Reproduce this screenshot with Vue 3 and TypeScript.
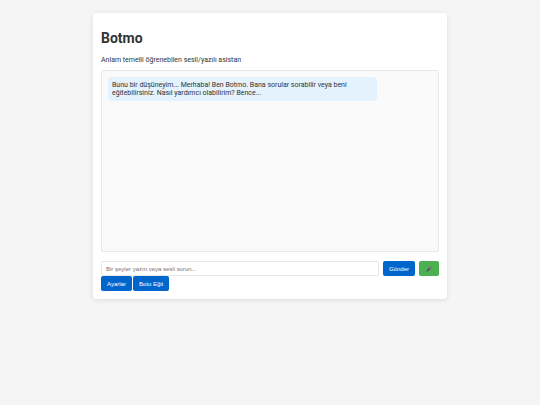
<script setup lang="ts">
import { ref } from 'vue'

interface Message {
  id: number
  text: string
}

const messages = ref<Message[]>([
  {
    id: 1,
    text: 'Bunu bir düşüneyim... Merhaba! Ben Botmo. Bana sorular sorabilir veya beni eğitebilirsiniz. Nasıl yardımcı olabilirim? Bence...',
  },
])
const draft = ref('')
</script>

<template>
  <main class="card">
    <h1 class="title">Botmo</h1>
    <p class="subtitle">Anlam temelli öğrenebilen sesli/yazılı asistan</p>
    <section class="chat" aria-label="Sohbet">
      <div v-for="message in messages" :key="message.id" class="message">{{ message.text }}</div>
    </section>
    <form class="composer" @submit.prevent>
      <input
        v-model="draft"
        class="field"
        type="text"
        aria-label="Mesaj"
        placeholder="Bir şeyler yazın veya sesli sorun..."
      />
      <button class="btn" type="submit">Gönder</button>
      <button class="btn mic" type="button" aria-label="Sesli sor">
        <svg class="icon" viewBox="0 0 16 16" aria-hidden="true">
          <path d="M2.6 15 L1 13.4 L7 5.6 L10.6 9 Z" fill="#4b5357" />
          <circle cx="11.2" cy="4.8" r="4.2" fill="#7b8589" />
          <path d="M9 2.4 L13.6 7 M11.4 1.2 L14.8 4.6" stroke="#596064" stroke-width="0.8" />
          <path d="M7 5 L11 9" stroke="#30383b" stroke-width="1.8" />
        </svg>
      </button>
    </form>
    <div class="actions">
      <button class="btn" type="button">Ayarlar</button>
      <button class="btn" type="button">Botu Eğit</button>
    </div>
  </main>
</template>

<style>
body {
  margin: 0;
  background: #f5f5f5;
}
</style>

<style scoped>
.card {
  box-sizing: border-box;
  max-width: 354px;
  margin: 13px auto;
  padding: 17px 8px 8px;
  background: #fff;
  border-radius: 3px;
  box-shadow: 0 1px 5px rgba(0, 0, 0, 0.1);
  color: #333;
  font-family: Roboto, sans-serif;
  font-size: 7px;
  line-height: 8px;
}

.title {
  margin: 0 0 10px;
  font-size: 14px;
  line-height: 16px;
  font-weight: 700;
}

.subtitle {
  margin: 0 0 6px;
}

.chat {
  box-sizing: border-box;
  min-height: 182px;
  padding: 6px;
  background: #fafafa;
  border: 1px solid #e8e8e8;
  border-radius: 2px;
}

.message {
  box-sizing: border-box;
  width: fit-content;
  max-width: 83%;
  padding: 4px;
  background: #e3f2fd;
  border-radius: 4px;
}

.composer {
  display: flex;
  gap: 4px;
  margin-top: 9px;
}

.field {
  box-sizing: border-box;
  flex: 1;
  min-width: 0;
  height: 15px;
  padding: 0 4px;
  border: 1px solid #e8e8e8;
  border-radius: 2px;
  background: #fff;
  color: #333;
  font-family: "Liberation Sans", Arial, sans-serif;
  font-size: 6px;
}

.field::placeholder {
  color: #757575;
}

.btn {
  display: inline-flex;
  align-items: center;
  justify-content: center;
  height: 15px;
  padding: 0 6px;
  border: 0;
  border-radius: 2px;
  background: #0066cc;
  color: #fff;
  font-family: "Liberation Sans", Arial, sans-serif;
  font-size: 6px;
  cursor: pointer;
}

.mic {
  padding: 0 7px;
  background: #4caf50;
}

.icon {
  width: 6px;
  height: 6px;
  fill: none;
}

.actions {
  display: flex;
  gap: 1px;
}
</style>
